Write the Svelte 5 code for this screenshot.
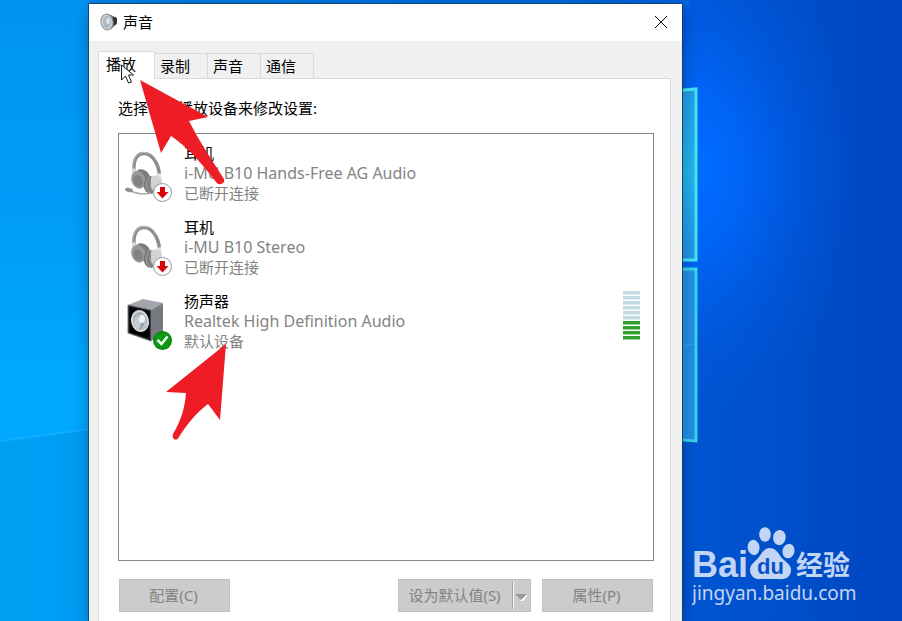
<script>
	const tabs = ['播放', '录制', '声音', '通信'];

	const devices = [
		{ name: '耳机', detail: 'i-MU B10 Hands-Free AG Audio', status: '已断开连接', icon: 'headset', mic: true },
		{ name: '耳机', detail: 'i-MU B10 Stereo', status: '已断开连接', icon: 'headset', mic: false },
		{ name: '扬声器', detail: 'Realtek High Definition Audio', status: '默认设备', icon: 'speaker', level: 4 }
	];

	const meterSteps = 10;

	let activeTab = $state(0);
</script>

{#snippet headset(mic)}
	<svg class="device-icon" viewBox="0 0 48 54" aria-hidden="true">
		<path d="M9 21C8 10 12 3.5 19 3.5c8 0 14 9 15.500 21" fill="none" stroke="#8d8d8d" stroke-width="3.500" />
		<path d="M8 20C7 9 12 2.500 19 2.500c6 0 10 3 12 8" fill="none" stroke="#bdbdbd" />
		<path d="M7 19l3-1 2 6-5 4z" fill="#d9d9d9" />
		<path d="M32 24l4-1 1 9-5 5z" fill="#e3e3e3" />
		<ellipse cx="17" cy="28" rx="8" ry="9" fill="#7c7c7c" transform="rotate(-35 17 28)" />
		<ellipse cx="13.500" cy="30" rx="7" ry="9" fill="#999" transform="rotate(-20 13 30)" />
		<ellipse cx="13" cy="31" rx="4.500" ry="6" fill="#828282" transform="rotate(-20 13 31)" />
		<ellipse cx="26" cy="35" rx="7.500" ry="9" fill="#8f8f8f" />
		<path d="M26 27c5-3 10-1 11 5l-2 8c-4 4-8 1-9-4z" fill="#d2d2d2" />
		<path d="M22 28c-4 5-3 12 2 15M26 27c-4 6-3 12 1 16" fill="none" stroke="#707070" />
		{#if mic}
			<path d="M4 40c5 3 13 5 22 3" fill="none" stroke="#b0b0b0" stroke-width="1.500" />
			<ellipse cx="4" cy="40" rx="4" ry="2" fill="#919191" transform="rotate(15 4 40)" />
		{/if}
		<circle cx="37.500" cy="42.500" r="9" fill="#fff" stroke="#999" />
		<path d="M35 37h5v5h3.500l-6 6.500-6-6.500H35z" fill="#d5070d" />
	</svg>
{/snippet}

{#snippet speaker()}
	<svg class="device-icon" viewBox="0 0 48 54" aria-hidden="true">
		<path d="M3 7L18 1l20 4-12 7z" fill="#a3a5ac" />
		<path d="M26 12l12-7v30l-12 8z" fill="#777982" />
		<path d="M3 7l23 5v31L3 35z" fill="#151515" stroke="#777" />
		<path d="M5 10l19 4v26L5 34z" fill="#000" />
		<ellipse cx="15" cy="23" rx="9" ry="11" fill="#d4d9df" transform="rotate(-12 15 23)" />
		<ellipse cx="15" cy="23" rx="7" ry="9" fill="#a5b0b8" transform="rotate(-12 15 23)" />
		<ellipse cx="15" cy="24" rx="6" ry="7" fill="#c3ccd3" />
		<path d="M13 18c6-1 8 3 6 9-2 3-3 4-5 4 3-4 2-8-1-13z" fill="#94a0a9" />
		<ellipse cx="17" cy="21" rx="3" ry="4" fill="#edf1f4" />
		<circle cx="37.500" cy="42.500" r="9.500" fill="#0b8610" />
		<circle cx="37.500" cy="42.500" r="8" fill="#0c9a12" />
		<path d="M32.500 42l4 4 6-7.500" fill="none" stroke="#fff" stroke-width="2.500" />
	</svg>
{/snippet}

<main class="desktop">
	<svg class="wallpaper" viewBox="0 0 902 621" preserveAspectRatio="none" aria-hidden="true">
		<defs>
			<linearGradient id="base" x1="0" x2="1">
				<stop offset="0" stop-color="#00a0f4" />
				<stop offset="0.12" stop-color="#009af4" />
				<stop offset="0.74" stop-color="#0057d4" />
				<stop offset="1" stop-color="#0046c0" />
			</linearGradient>
			<radialGradient
				id="glow"
				cx="0"
				cy="0"
				r="1"
				gradientUnits="userSpaceOnUse"
				gradientTransform="matrix(170 0 0 250 690 170)"
			>
				<stop offset="0" stop-color="#006eff" />
				<stop offset="0.3" stop-color="#0067fc" stop-opacity="0.9" />
				<stop offset="1" stop-color="#0058dc" stop-opacity="0" />
			</radialGradient>
			<linearGradient id="beam" x1="0" y1="0" x2="0" y2="1">
				<stop offset="0" stop-color="#0094f2" />
				<stop offset="0.5" stop-color="#009cf8" />
				<stop offset="0.85" stop-color="#00a8ff" />
				<stop offset="1" stop-color="#00a8ff" />
			</linearGradient>
			<linearGradient id="pane" x1="0" y1="0" x2="0" y2="1">
				<stop offset="0" stop-color="#239eea" />
				<stop offset="0.5" stop-color="#22b5ee" />
				<stop offset="1" stop-color="#2391e8" />
			</linearGradient>
		</defs>
		<rect width="902" height="621" fill="url(#base)" />
		<path d="M0 0h90v429L0 441z" fill="url(#beam)" />
		<path d="M90 0h600v6H90z" fill="#006fe0" opacity="0.6" />
		<path d="M0 441l90-12" stroke="#12adff" stroke-width="2" />
		<rect x="600" width="302" height="621" fill="url(#glow)" />
		<path d="M600 97l96-8v171h-96z" fill="url(#pane)" stroke="#46e6f2" stroke-width="3" />
		<path d="M600 269h96v172l-96-7z" fill="#2490e7" stroke="#36d5ee" stroke-width="3" />
		<path d="M680 346l15-2" stroke="#31a9ee" />
	</svg>

	<section class="dialog" aria-label="声音">
		<header class="title-bar">
			<svg class="title-icon" viewBox="0 0 18 18" aria-hidden="true">
				<path d="M6 1l5 1 6 3v6l-6 5-5 1z" fill="#6b6b6b" />
				<path d="M11 5l5-1 1 3-1 4-4 2z" fill="#2e2e2e" />
				<ellipse cx="7" cy="9" rx="6" ry="8" fill="#cfd2d4" stroke="#8b8b8b" transform="rotate(-10 7 9)" />
				<ellipse cx="7" cy="9" rx="4" ry="6" fill="#a9b8c1" />
				<ellipse cx="8" cy="8" rx="2" ry="3" fill="#dce5ea" />
			</svg>
			<h1>声音</h1>
			<button class="close" aria-label="关闭">
				<svg viewBox="0 0 12 12"><path d="M0 0l12 12M12 0L0 12" stroke="#000" /></svg>
			</button>
		</header>

		<div class="content">
			<div class="tabs" role="tablist">
				{#each tabs as tab, i}
					<button
						class="tab"
						class:active={activeTab === i}
						role="tab"
						aria-selected={activeTab === i}
						onclick={() => (activeTab = i)}>{tab}</button
					>
				{/each}
			</div>

			<div class="panel" role="tabpanel">
				<p class="hint">选择以下播放设备来修改设置:</p>

				<ul class="devices">
					{#each devices as device}
						<li class="device">
							{#if device.icon === 'headset'}
								{@render headset(device.mic)}
							{:else}
								{@render speaker()}
							{/if}
							<div class="info">
								<strong>{device.name}</strong>
								<span class="detail">{device.detail}</span>
								<span>{device.status}</span>
							</div>
							{#if device.level}
								<div class="meter">
									{#each { length: meterSteps } as _, i}
										<i class:lit={i >= meterSteps - device.level}></i>
									{/each}
								</div>
							{/if}
						</li>
					{/each}
				</ul>

				<div class="actions">
					<button class="action" disabled>配置(C)</button>
					<div class="split">
						<button class="default" disabled>设为默认值(S)</button>
						<button class="more" disabled aria-label="更多">
							<svg viewBox="0 0 13 8"><path d="M5 8l7-7v2L8 8z" fill="#fff" /><path d="M0 1h12L6 7z" fill="#999" /></svg>
						</button>
					</div>
					<button class="action" disabled>属性(P)</button>
				</div>
			</div>
		</div>
	</section>

	<svg class="marks" viewBox="0 0 300 450" aria-hidden="true">
		<path d="M121.500 65v15l4-4 3 7 3-1-3-7h5z" fill="#fff" stroke="#15152a" />
		<path
			d="M140 80L208 117L189 121C199 141 211 159 224 179Q225 183 221 184Q218 185 216 182C203 165 188 147 171 136L161 153Z"
			fill="#ee1c24"
		/>
		<path
			d="M226 344L220 420L208 404C197 412 187 424 179 437Q177 441 174 439Q172 438 173 434C182 419 185 406 186 393L166 392Z"
			fill="#ee1c24"
		/>
	</svg>

	<svg class="watermark" viewBox="0 0 164 82" aria-hidden="true">
		<text class="brand" x="0" y="52">Bai</text>
		<ellipse cx="73" cy="9.500" rx="5.800" ry="7.300" />
		<ellipse cx="87.500" cy="12.500" rx="6.300" ry="7.600" transform="rotate(8 87 12)" />
		<ellipse cx="61.500" cy="22.500" rx="6" ry="7.600" transform="rotate(-8 61 22)" />
		<ellipse cx="96.500" cy="26" rx="6" ry="7.300" transform="rotate(15 96 26)" />
		<path d="M78 23c5 0 8 4 11 9 4 5 10 7 10 13 0 7-6 10-12 9H69c-6 1-11-3-11-9 0-6 5-8 9-13 3-5 6-9 11-9z" />
		<text class="du" x="65" y="49">du</text>
		<text class="cn" x="104" y="50">经验</text>
		<text class="url" x="0" y="75">jingyan.baidu.com</text>
	</svg>
</main>

<style>
	:global(body) {
		margin: 0;
	}

	.desktop {
		position: relative;
		display: flex;
		box-sizing: border-box;
		height: 100vh;
		padding: 4px 220px 0 89px;
		overflow: hidden;
		background: #0057d8;
		color: #000;
		font-family: 'Noto Sans', 'Noto Sans CJK SC', sans-serif;
		font-size: 15px;
		line-height: 20px;
	}

	.wallpaper {
		position: absolute;
		inset: 0;
		width: 100%;
		height: 100%;
	}

	button {
		margin: 0;
		padding: 0;
		border: 0;
		font: inherit;
		color: inherit;
	}

	.dialog {
		position: relative;
		display: flex;
		flex: 1;
		flex-direction: column;
		min-width: 0;
		background: #f0f0f0;
		box-shadow:
			0 0 0 1px rgb(20 50 80 / 0.7),
			0 4px 16px rgb(0 0 0 / 0.3);
	}

	.title-bar {
		display: flex;
		box-sizing: border-box;
		align-items: center;
		height: 37px;
		padding: 0 14px 2px 11px;
		background: #fff;
	}

	.title-icon {
		width: 18px;
		height: 18px;
	}

	h1 {
		flex: 1;
		margin: 0 0 0 5px;
		font-size: 15px;
		font-weight: 400;
	}

	.close {
		display: grid;
		background: none;
	}

	.close svg {
		width: 12px;
		height: 12px;
		padding: 1px;
		overflow: visible;
	}

	.content {
		display: flex;
		flex: 1;
		flex-direction: column;
		padding: 10px 11px 0 9px;
	}

	.tabs {
		display: flex;
		align-items: flex-end;
		height: 27px;
	}

	.tab {
		box-sizing: border-box;
		height: 25px;
		padding: 0 17px 0 5px;
		border: 1px solid #d9d9d9;
		border-width: 1px 1px 0 0;
		background: #f0f0f0;
	}

	.tab.active {
		position: relative;
		height: 28px;
		margin-bottom: -1px;
		padding: 0 18px 4px 7px;
		border-left-width: 1px;
		background: #fff;
		z-index: 1;
	}

	.panel {
		flex: 1;
		padding: 19px 16px 0 19px;
		border: 1px solid #d9d9d9;
		border-bottom: 0;
		background: #fff;
	}

	.hint {
		margin: 0 0 15px;
	}

	.devices {
		box-sizing: border-box;
		min-height: 428px;
		margin: 0;
		padding: 9px 13px 0 6px;
		border: 1px solid #828790;
		list-style: none;
	}

	.device {
		display: flex;
		align-items: flex-start;
		height: 74px;
	}

	.device-icon {
		width: 48px;
		height: 54px;
		margin-top: 7px;
	}

	.info {
		display: flex;
		flex: 1;
		flex-direction: column;
		margin-left: 11px;
		color: #838383;
	}

	.info strong {
		color: #000;
		font-weight: 400;
	}

	.detail {
		font-size: 16px;
	}

	.meter {
		display: grid;
		gap: 1px;
	}

	.meter i {
		width: 17px;
		height: 3px;
		border-bottom: 1px solid #dcebef;
		background: #c2dce4;
	}

	.meter .lit {
		border-color: #9bd29b;
		background: #30a030;
	}

	.actions {
		display: flex;
		margin: 18px 1px 0;
	}

	.action,
	.split {
		box-sizing: border-box;
		height: 33px;
		border: 1px solid #bfbfbf;
		background: #ccc;
		color: #838383;
	}

	.action {
		width: 111px;
	}

	.action,
	.default {
		padding: 0 2px 2px 0;
	}

	.split {
		display: flex;
		width: 133px;
		margin: 0 11px 0 auto;
	}

	.default,
	.more {
		background: none;
	}

	.default {
		flex: 1;
	}

	.more {
		width: 18px;
		margin: 2px 0;
		padding-bottom: 2px;
		border-left: 1px solid #a0a0a0;
		box-shadow: inset 1px 0 #fff;
	}

	.more svg {
		width: 13px;
		height: 8px;
	}

	.marks {
		position: absolute;
		top: 0;
		left: 0;
		z-index: 2;
		width: 300px;
		height: 450px;
		pointer-events: none;
	}

	.watermark {
		position: absolute;
		right: 46px;
		bottom: 14px;
		width: 164px;
		height: 82px;
		fill: #c3d5f4;
	}

	.brand {
		font: bold 36px 'Liberation Sans', sans-serif;
	}

	.du {
		fill: #0750c8;
		font: bold 22px 'Liberation Sans', sans-serif;
	}

	.cn {
		font: bold 27px 'Noto Sans CJK SC', sans-serif;
	}

	.url {
		font: 19px 'Noto Sans', sans-serif;
	}
</style>
